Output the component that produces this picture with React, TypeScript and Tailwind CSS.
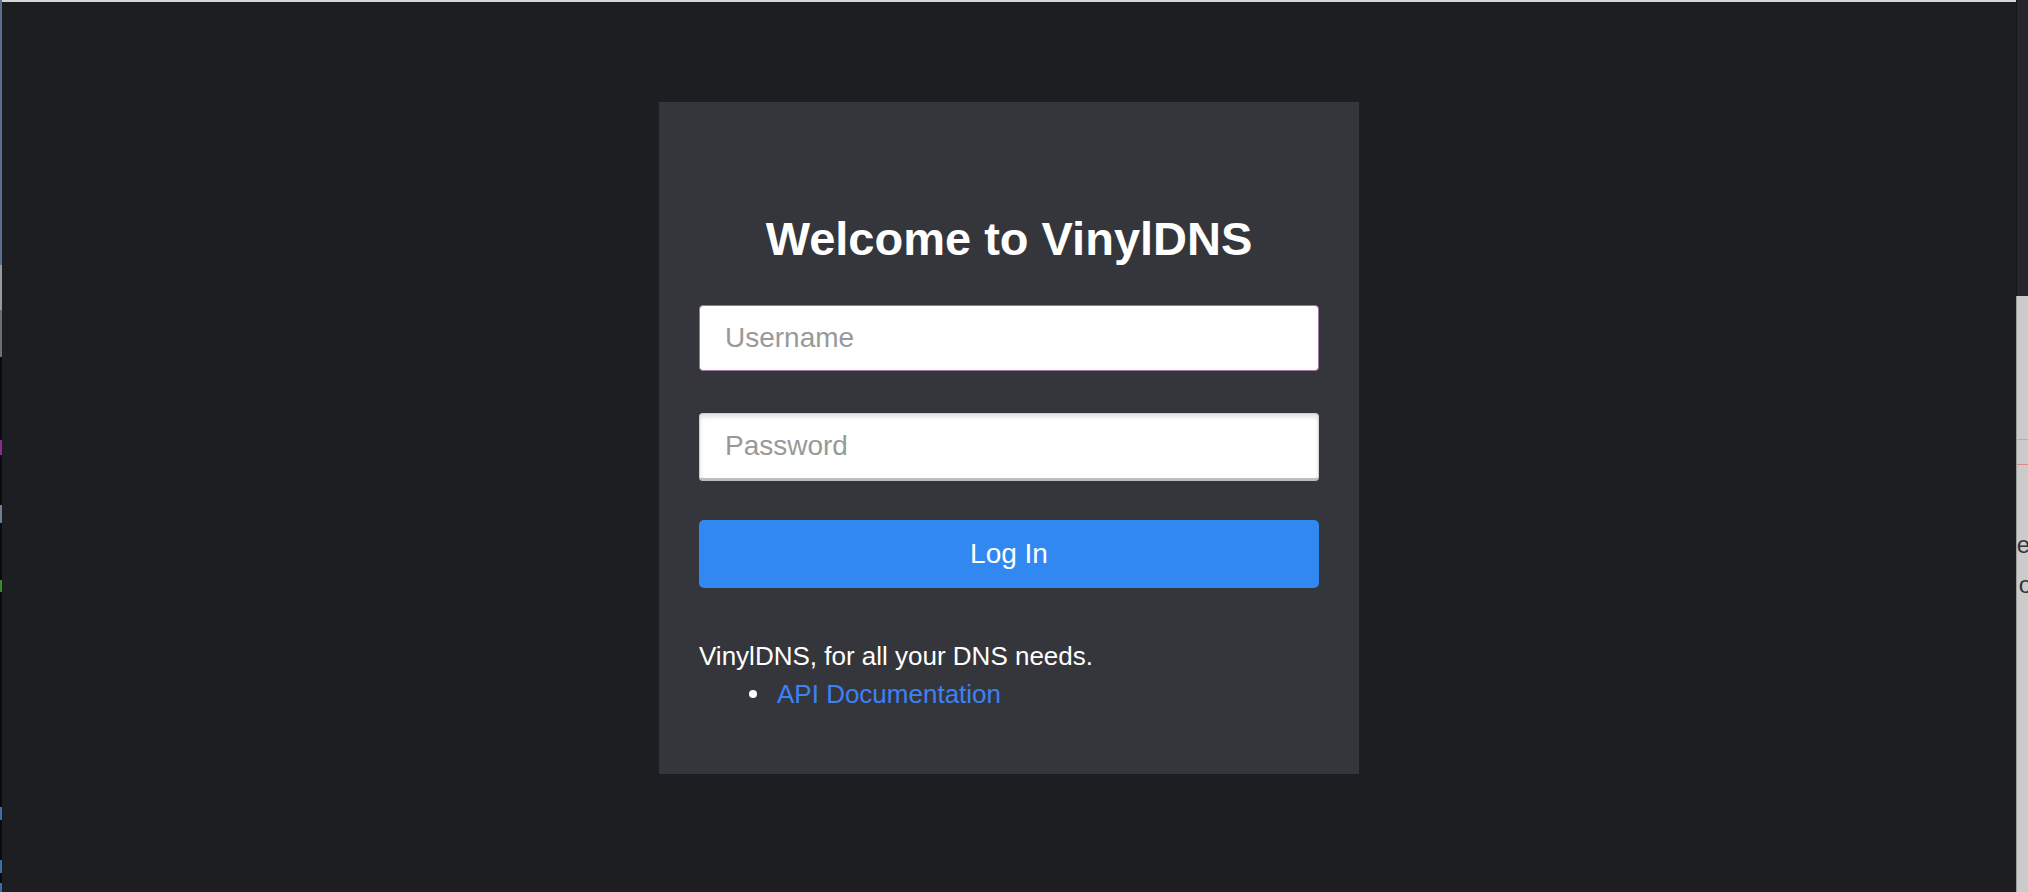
import { useState } from "react";

// thin strip of some other window peeking in on the left edge
const leftEdge = [
  { h: 265, c: "bg-[#5b718a]" },
  { h: 45, c: "bg-[#9a9a9a]" },
  { h: 47, c: "bg-[#6f6f6f]" },
  { h: 83, c: "bg-[#0a0a0a]" },
  { h: 15, c: "bg-[#8e2a8e]" },
  { h: 50, c: "bg-[#0a0a0a]" },
  { h: 18, c: "bg-[#6e8093]" },
  { h: 57, c: "bg-[#0a0a0a]" },
  { h: 12, c: "bg-[#3a8a2a]" },
  { h: 215, c: "bg-[#0a0a0a]" },
  { h: 13, c: "bg-[#3b6ea5]" },
  { h: 40, c: "bg-[#0a0a0a]" },
  { h: 13, c: "bg-[#3b6ea5]" },
  { h: 10, c: "bg-[#0a0a0a]" },
  { h: 9, c: "bg-[#3b6ea5]" },
];

function LoginCard() {
  const [username, setUsername] = useState("");
  const [password, setPassword] = useState("");

  return (
    <div className="w-[700px] bg-[#35363b] px-10 pt-[112px] pb-[61px] flex flex-col">
      <h1 className="text-[47px] leading-[50px] font-bold text-white text-center">
        Welcome to VinylDNS
      </h1>

      <input
        value={username}
        onChange={(e) => setUsername(e.target.value)}
        placeholder="Username"
        className="mt-[41px] h-[66px] w-full rounded-[4px] border border-[#9c74a8] bg-white px-[25px] text-[28px] text-gray-800 placeholder:text-[#999999] outline-none"
      />

      <input
        type="password"
        value={password}
        onChange={(e) => setPassword(e.target.value)}
        placeholder="Password"
        className="mt-[42px] h-[68px] w-full rounded-[4px] border border-[#cfcfcf] border-b-[3px] border-b-[#bdbdbd] bg-white px-[25px] text-[28px] text-gray-800 placeholder:text-[#999999] outline-none shadow-[inset_0_3px_4px_rgba(0,0,0,0.12)]"
      />

      <button className="mt-[39px] h-[68px] w-full rounded-[5px] bg-[#3288f1] text-[28px] text-white">
        Log In
      </button>

      <div className="mt-[50px] text-[26px] leading-[37.5px] text-white">
        <p>VinylDNS, for all your DNS needs.</p>
        <ul>
          <li className="flex items-center pl-[50px] gap-[20px]">
            <span className="w-2 h-2 rounded-full bg-white" />
            <a href="#" className="text-[#3b82f6]">
              API Documentation
            </a>
          </li>
        </ul>
      </div>
    </div>
  );
}

export default function App() {
  return (
    <div className="h-[892px] w-full flex overflow-hidden bg-[#1d1e22] font-['Liberation_Sans',Arial,sans-serif]">
      <div className="w-[2px] flex flex-col shrink-0">
        {leftEdge.map((s, i) => (
          <div key={i} className={s.c} style={{ height: s.h }} />
        ))}
      </div>

      <div className="flex-1 flex flex-col border-t-2 border-[#d6d6d6]">
        <div className="pt-[100px] flex justify-center">
          <LoginCard />
        </div>
      </div>

      {/* edge of the window behind */}
      <div className="w-[12px] shrink-0 flex flex-col">
        <div className="h-[296px] bg-[#25272c] border-l border-[#17181b]" />
        <div className="flex-1 bg-[#cbcbcb] border-l border-[#9d9d9d] flex flex-col overflow-hidden">
          <div className="h-[144px] border-b border-[#b0b0b0]" />
          <div className="h-[25px] border-b border-[#d98c8c]" />
          <div className="mt-[60px] flex justify-end text-[24px] leading-[40px] text-[#333] whitespace-nowrap">
            <span className="-mr-[2px]">e</span>
          </div>
          <div className="flex justify-end text-[24px] leading-[40px] text-[#333] whitespace-nowrap">
            <span className="-mr-[4px]">o</span>
          </div>
        </div>
      </div>
    </div>
  );
}
